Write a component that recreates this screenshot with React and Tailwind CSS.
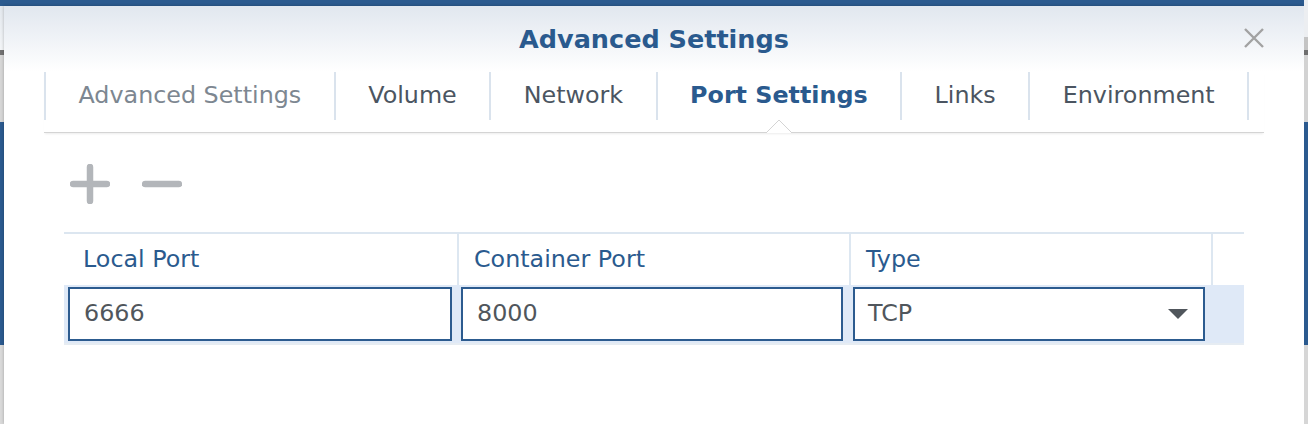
export default function App() {
  const tabs = [
    { label: "Advanced Settings", cls: "text-[#7d8791]" },
    { label: "Volume", cls: "text-[#4b5561]" },
    { label: "Network", cls: "text-[#4b5561]" },
    { label: "Port Settings", cls: "text-[#2a5a8e] font-bold", active: true },
    { label: "Links", cls: "text-[#4b5561]" },
    { label: "Environment", cls: "text-[#4b5561]" },
  ];
  return (
    <div className="w-[1308px] h-[424px] overflow-hidden flex bg-white font-['DejaVu_Sans',Verdana,sans-serif]">
      {/* left background strip */}
      <div className="w-[4px] flex flex-col shrink-0">
        <div className="h-[6px] bg-[#2b5a8f]" />
        <div className="h-[44px] bg-gradient-to-b from-[#e3e8ee] to-[#f3f5f7]" />
        <div className="h-[5px] bg-[#727272]" />
        <div className="h-[67px] bg-[#d6d6d6]" />
        <div className="h-[223px] bg-[#2b5a8f]" />
        <div className="flex-1 bg-[#d9d9d9]" />
      </div>

      {/* middle: dialog */}
      <div className="flex-1 flex flex-col">
        <div className="h-[6px] bg-[#2b5a8f] mr-[-2px]" />
        <div className="flex-1 bg-white flex flex-col shadow-[0_0_3px_rgba(0,0,0,0.25)]">
          {/* header */}
          <div className="relative h-[66px] bg-gradient-to-b from-[#e1e7ef] to-white flex items-center justify-center">
            <span className="text-[25.5px] font-bold text-[#2a5a8e] leading-none mt-[2px]">Advanced Settings</span>
            <svg className="absolute right-[39px] top-[21px]" width="22" height="22" viewBox="0 0 22 22">
              <path d="M2 2 L20 20 M20 2 L2 20" stroke="#a2a2a2" strokeWidth="2.4" fill="none" />
            </svg>
          </div>

          {/* tabs */}
          <div className="mx-[40px] pb-[12px] border-b border-[#d4d4d4] shadow-[0_2px_2px_-1px_rgba(0,0,0,0.08)] flex">
            {tabs.map((t, i) => (
              <div
                key={t.label}
                className={`relative h-[48px] px-[32.5px] flex items-center border-l-2 border-[#dae3ed] ${i === tabs.length - 1 ? "border-r-2" : ""}`}
              >
                <span className={`text-[23.8px] leading-none whitespace-nowrap ${t.cls}`}>{t.label}</span>
                {t.active && (
                  <svg className="absolute top-[48px] left-1/2 -translate-x-1/2" width="26" height="14" viewBox="0 0 26 14">
                    <polygon points="0,13 13,0 26,13" fill="white" />
                    <polyline points="0,13 13,0 26,13" fill="none" stroke="#d4d4d4" strokeWidth="1" />
                  </svg>
                )}
              </div>
            ))}
          </div>

          {/* content */}
          <div className="px-[60px]">
            {/* toolbar */}
            <div className="mt-[31px] pl-[6px] flex gap-[32px]">
              <svg width="40" height="40" viewBox="0 0 40 40">
                <path d="M20 3 L20 37 M3 20 L37 20" stroke="#b3b6ba" strokeWidth="6.5" strokeLinecap="round" fill="none" />
              </svg>
              <svg width="40" height="40" viewBox="0 0 40 40">
                <path d="M3 20 L37 20" stroke="#b3b6ba" strokeWidth="6.5" strokeLinecap="round" fill="none" />
              </svg>
            </div>

            {/* table */}
            <div className="mt-[28px] border-t-2 border-[#dce6f0]">
              <div className="grid grid-cols-[393px_392px_362px_33px] h-[51px] text-[23.8px] text-[#2a5a8e]">
                <div className="pl-[19px] flex items-center">Local Port</div>
                <div className="pl-[15px] flex items-center border-l-2 border-[#dde7f1]">Container Port</div>
                <div className="pl-[15px] flex items-center border-l-2 border-[#dde7f1]">Type</div>
                <div className="border-l-2 border-[#dde7f1]" />
              </div>
              <div className="grid grid-cols-[393px_392px_362px_33px] py-[2px] bg-[#dfe9f7] border-b-2 border-[#e6ecf2] text-[23.8px] text-[#50565c]">
                <div className="pl-[4px] pr-[5px]">
                  <div className="h-[54px] border-2 border-[#2c5b8f] bg-white pl-[14px] flex items-center">6666</div>
                </div>
                <div className="pl-[4px] pr-[6px]">
                  <div className="h-[54px] border-2 border-[#2c5b8f] bg-white pl-[14px] flex items-center">8000</div>
                </div>
                <div className="pl-[4px] pr-[6px]">
                  <div className="h-[54px] border-2 border-[#2c5b8f] bg-white pl-[13px] pr-[15px] flex items-center justify-between">
                    <span>TCP</span>
                    <svg width="20" height="10" viewBox="0 0 20 10">
                      <polygon points="0,0 20,0 10,10" fill="#50565c" />
                    </svg>
                  </div>
                </div>
                <div />
              </div>
            </div>
          </div>
        </div>
      </div>

      {/* right background strip */}
      <div className="w-[4px] flex flex-col shrink-0">
        <div className="h-[37px] bg-[#eceef1]" />
        <div className="h-[13px] bg-[#c4c4c4]" />
        <div className="h-[5px] bg-[#6f6f6f]" />
        <div className="h-[67px] bg-[#d2d2d2]" />
        <div className="h-[223px] bg-[#2b5a8f]" />
        <div className="flex-1 bg-[#d6d6d6]" />
      </div>
    </div>
  );
}
